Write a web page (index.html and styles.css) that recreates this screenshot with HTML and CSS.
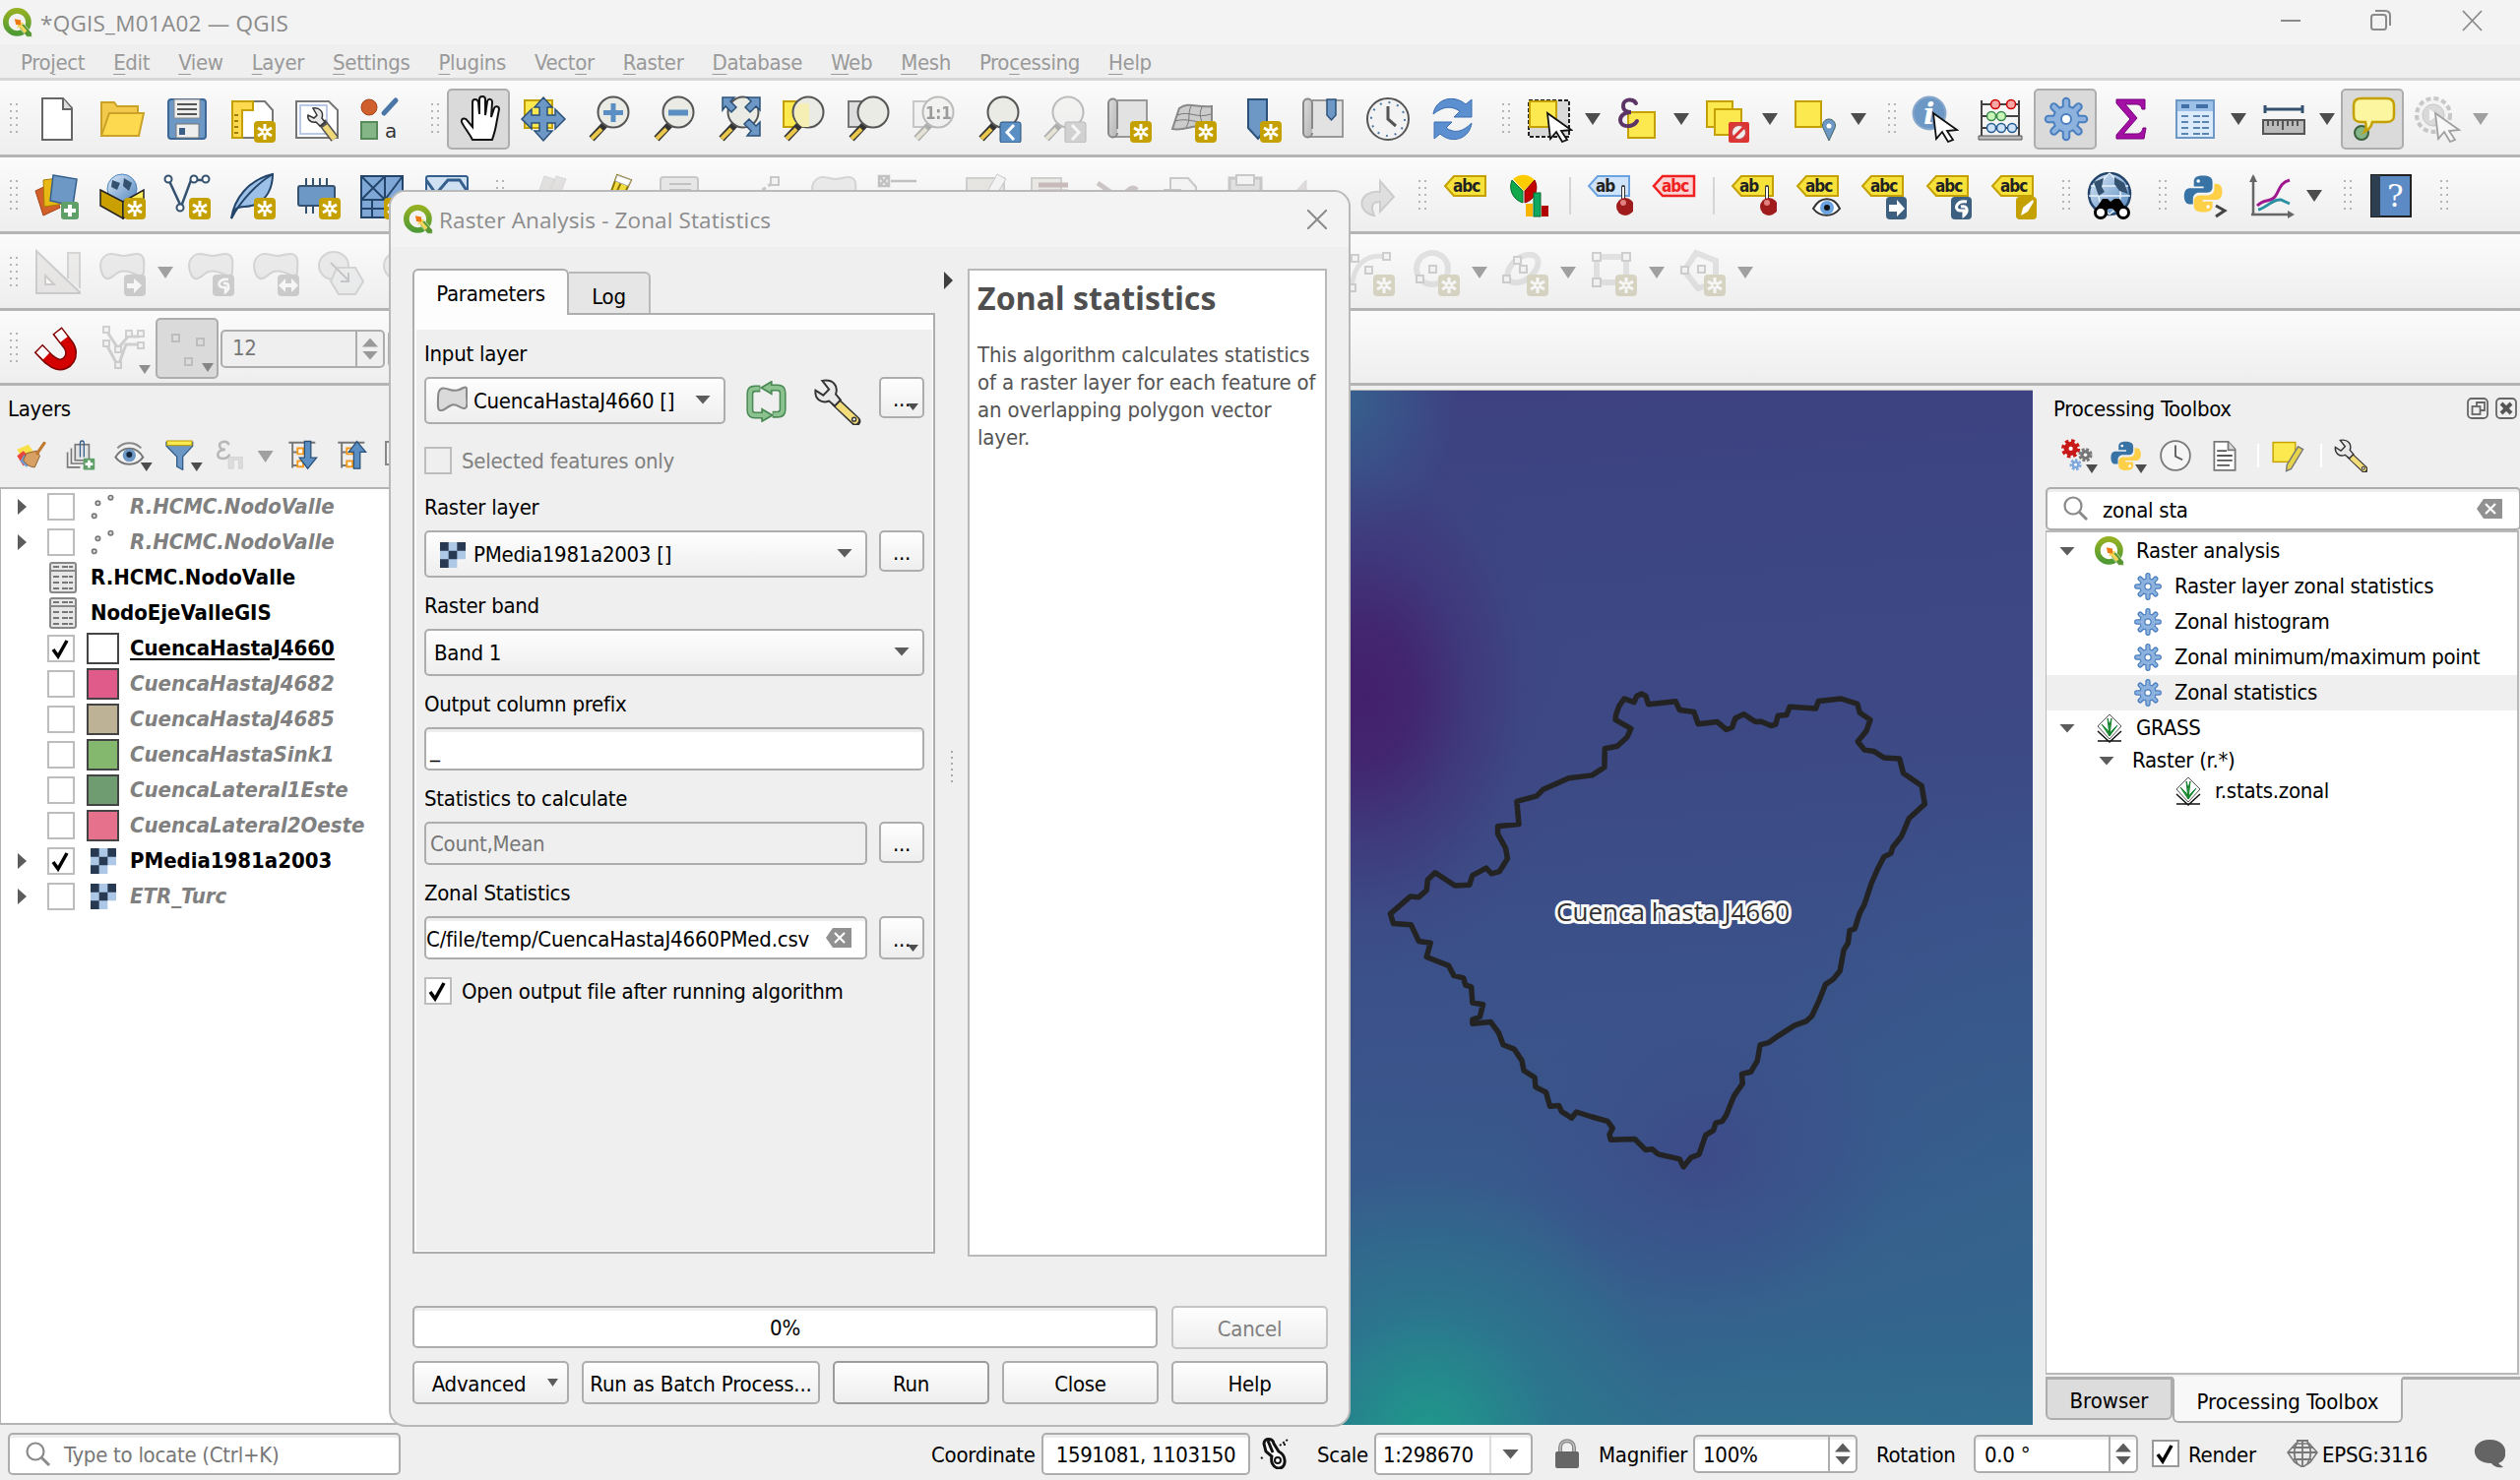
FILE: index.html
```html
<!DOCTYPE html>
<html lang="en">
<head>
<meta charset="utf-8">
<title>QGIS</title>
<link rel="stylesheet" href="styles.css">
</head>
<body>
<svg class="defs" aria-hidden="true">
<defs>
<linearGradient id="qg" x1="0" y1="0" x2="0" y2="1"><stop offset="0" stop-color="#93b023"/><stop offset="1" stop-color="#4f9a35"/></linearGradient>
<linearGradient id="steel" x1="0" y1="0" x2="1" y2="1"><stop offset="0" stop-color="#dcdcdc"/><stop offset="1" stop-color="#b5b5b5"/></linearGradient>
<linearGradient id="sky" x1="0" y1="0" x2="1" y2="1"><stop offset="0" stop-color="#dbe9f8"/><stop offset="1" stop-color="#4f84bd"/></linearGradient>
</defs>

<symbol id="logo" viewBox="0 0 48 48"><circle cx="23" cy="23" r="18.500" fill="none" stroke="url(#qg)" stroke-width="9"/><path d="M27 27l7-1 13 15v6h-8L27 33z" fill="#589632" stroke="#fff" stroke-width="1"/><path d="M25 24l9 0-3 4 8 9-4 4-8-10-4 2z" fill="#f5d65a"/><path d="M19 18l10 2 0 8-8-1z" fill="#ee7913"/></symbol>

<symbol id="b-new" viewBox="0 0 48 48"><rect x="26" y="26" width="22" height="22" rx="4" fill="#c4a000"/><path d="M37 29v16M30 33l14 8M30 41l14-8" stroke="#fff" stroke-width="3"/><circle cx="37" cy="37" r="3.500" fill="#fff"/><circle cx="37" cy="37" r="1.500" fill="#c4a000"/></symbol>
<symbol id="lens" viewBox="0 0 48 48"><path d="M21 29L7 44" stroke="#333" stroke-width="7"/><path d="M17 34L7 44" stroke="#eac64a" stroke-width="4"/><circle cx="29" cy="17" r="15.500" fill="#ebebe6" stroke="#555" stroke-width="2"/></symbol>
<symbol id="cursor" viewBox="0 0 48 48"><path d="M22 18l24 17-10 1 6 9-5 2-6-10-6 7z" fill="#fff" stroke="#111" stroke-width="1.800"/></symbol>
<symbol id="tag" viewBox="0 0 48 48"><path d="M12 4h32v20H12L3 14z" fill="#f7e23c" stroke="#c4a000" stroke-width="2"/><text x="11" y="20" class="ic-abc">abc</text></symbol>
<symbol id="poly" viewBox="0 0 48 48"><path d="M4 10c6-9 15-3 22-3s12-4 17-1 3 12 3 17-4 5-8 3-10-5-16-3-9 9-14 7-8-14-4-20z" fill="#d2d5d2" stroke="#999" stroke-width="2"/></symbol>
<symbol id="b-grey" viewBox="0 0 48 48"><rect x="26" y="26" width="22" height="22" rx="4" fill="#888"/></symbol>

<symbol id="new" viewBox="0 0 48 48"><path d="M9 3h21l9 10v32H9z" fill="#fff" stroke="#666" stroke-width="2"/><path d="M30 3v11h9" fill="#ddd" stroke="#666" stroke-width="2"/></symbol>
<symbol id="open" viewBox="0 0 48 48"><path d="M3 40V7h13l3 4h21v7" fill="#f2c94b" stroke="#c9a227" stroke-width="2"/><path d="M3 41l8-23h35l-5 23z" fill="#fcd94f" stroke="#c9a227" stroke-width="2"/></symbol>
<symbol id="save" viewBox="0 0 48 48"><rect x="5" y="4" width="38" height="40" rx="3" fill="#6d97c4" stroke="#3b6796" stroke-width="2"/><rect x="11" y="4" width="26" height="19" fill="#eee" stroke="#888"/><path d="M14 9h20M14 14h20M14 19h20" stroke="#555" stroke-width="2"/><rect x="13" y="29" width="23" height="14" fill="#eee" stroke="#777"/><rect x="16" y="33" width="6" height="7" fill="#3b5f86"/></symbol>
<symbol id="layout" viewBox="0 0 48 48"><path d="M4 6h33l8 9v28H4z" fill="#fff" stroke="#777" stroke-width="2"/><path d="M4 6h21v9H14v28H4z" fill="#fcd94f" stroke="#c4a000" stroke-width="2"/><path d="M6 20h4M6 26h4M6 32h4M6 38h4" stroke="#a08000" stroke-width="2"/><use href="#b-new"/></symbol>
<symbol id="layman" viewBox="0 0 48 48"><path d="M3 6h33l9 9v28H3z" fill="#fff" stroke="#777" stroke-width="2"/><path d="M7 10h27v29H7z" fill="none" stroke="#bcc9e6" stroke-width="2"/><path d="M29 27l13 17" stroke="#555" stroke-width="9"/><path d="M32 31l10 13" stroke="#f0d878" stroke-width="6"/><path d="M20 13c7-1 11 4 9 10l3 4-5 4-4-4c-6 1-9-3-8-7l6 3 3-3z" fill="#e8e8e8" stroke="#333" stroke-width="1.500"/></symbol>
<symbol id="style" viewBox="0 0 48 48"><circle cx="11" cy="12" r="8" fill="#cf5f2c" stroke="#a4441a"/><path d="M26 18L38 5" stroke="#4a76a8" stroke-width="5" stroke-linecap="round"/><rect x="3" y="27" width="16" height="17" fill="#84b587" stroke="#578a5b" stroke-width="2"/><text x="27" y="43" font-family="DejaVu Sans" font-size="20" fill="#333">a</text></symbol>
<symbol id="hand" viewBox="0 0 48 48"><path d="M16 45c-4-8-9-13-11-18-1-4 4-5 6-1l5 6V7c0-4 5-4 6 0l1 12V4c0-4 6-4 6 0v16l2-14c1-3 5-3 5 1l-1 15 3-9c1-3 5-2 5 1l-3 16c-1 6-2 9-4 15z" transform="translate(1 0)" fill="#fff" stroke="#111" stroke-width="2"/></symbol>
<symbol id="pan" viewBox="0 0 48 48"><rect x="5" y="5" width="28" height="28" fill="#fce94f" stroke="#c4a000" stroke-width="2"/><path d="M24 2l9 10h-5v8h8v-6l10 10-10 10v-6h-8v8h5l-9 10-9-10h5v-8h-8v6L2 24l10-10v6h8v-8h-5z" fill="#6d97c4" stroke="#2b5178" stroke-width="1.500"/></symbol>
<symbol id="zin" viewBox="0 0 48 48"><use href="#lens"/><path d="M29 8v19M19 17.500h20" stroke="#5b8fc4" stroke-width="5"/></symbol>
<symbol id="zout" viewBox="0 0 48 48"><use href="#lens"/><path d="M19 17.500h20" stroke="#5b8fc4" stroke-width="6"/></symbol>
<symbol id="zfull" viewBox="0 0 48 48"><use href="#lens"/><path d="M8 2h12l-4 4 6 6-5 5-6-6-3 4zM46 2v13l-4-4-6 6-5-5 6-6-4-4zM46 41v-14l-4 4-7-7-5 5 7 7-4 5z" fill="#6d97c4" stroke="#2b5178" stroke-width="1.500"/></symbol>
<symbol id="zsel" viewBox="0 0 48 48"><rect x="4" y="6" width="26" height="26" fill="#fce94f" stroke="#c4a000" stroke-width="2"/><use href="#lens"/><path d="M20 8h10v24h-7a15 15 0 0 1-3-24z" fill="#f5efb5"/></symbol>
<symbol id="zlay" viewBox="0 0 48 48"><rect x="4" y="6" width="26" height="26" fill="#ddd" stroke="#777" stroke-width="2"/><use href="#lens"/></symbol>
<symbol id="zone" viewBox="0 0 48 48"><rect x="4" y="6" width="26" height="26" fill="#eee" stroke="#777" stroke-width="2"/><use href="#lens"/><text x="16" y="24" font-family="DejaVu Sans Condensed" font-weight="bold" font-size="17">1:1</text></symbol>
<symbol id="zlast" viewBox="0 0 48 48"><use href="#lens"/><rect x="26" y="27" width="21" height="21" rx="2" fill="#5b8fc4" stroke="#2b5178"/><path d="M40 30l-7 7.500 7 7.500" fill="none" stroke="#fff" stroke-width="3"/></symbol>
<symbol id="znext" viewBox="0 0 48 48"><use href="#lens"/><rect x="26" y="27" width="21" height="21" rx="2" fill="#999" stroke="#555"/><path d="M33 30l7 7.500-7 7.500" fill="none" stroke="#fff" stroke-width="3"/></symbol>
<symbol id="newmap" viewBox="0 0 48 48"><path d="M13 5h30v37H8" fill="#e2e2e2" stroke="#999" stroke-width="2"/><path d="M13 34V8c0-6-9-6-9 0v30c0 6 9 6 9 0" fill="url(#steel)" stroke="#888" stroke-width="2"/><use href="#b-new"/></symbol>
<symbol id="new3d" viewBox="0 0 48 48"><path d="M10 13c10-7 18 0 33-2v24c-15-10-25 2-40-1z" fill="#ccc" stroke="#888" stroke-width="2"/><path d="M8 20c12-5 20 4 34-1M6 26c12-4 22 3 36 1M22 11c-4 8 0 14-5 21M33 12c-4 8 0 13 1 19" fill="none" stroke="#777"/><use href="#b-new"/></symbol>
<symbol id="newbm" viewBox="0 0 48 48"><path d="M14 4h19v29l-9 11-10-11z" fill="#6d97c4" stroke="#2b5178" stroke-width="2"/><use href="#b-new"/></symbol>
<symbol id="bms" viewBox="0 0 48 48"><path d="M13 5h31v37H8" fill="#e2e2e2" stroke="#999" stroke-width="2"/><path d="M13 34V8c0-6-9-6-9 0v30c0 6 9 6 9 0" fill="url(#steel)" stroke="#888" stroke-width="2"/><path d="M28 4h9v16l-4.500 5L28 20z" fill="#6d97c4" stroke="#2b5178" stroke-width="1.500"/></symbol>
<symbol id="clock" viewBox="0 0 48 48"><circle cx="24" cy="24" r="21" fill="#f3f3f3" stroke="#555" stroke-width="2"/><circle cx="24" cy="24" r="17" fill="none" stroke="#4a76a8" stroke-width="2" stroke-dasharray="2 6.900"/><path d="M24 11v13l8 7" fill="none" stroke="#555" stroke-width="3"/></symbol>
<symbol id="refresh" viewBox="0 0 48 48"><path d="M4 19C6 4 24-2 37 9l6-5v18H25l6-6C22 10 14 11 4 19z" fill="#5b8fd0" stroke="#3b6fb0"/><path d="M43 28C41 44 23 50 11 39l-6 5V27h18l-6 6c9 6 17 4 26-5z" fill="#5b8fd0" stroke="#3b6fb0"/></symbol>

<symbol id="sel" viewBox="0 0 48 48"><rect x="3" y="5" width="41" height="37" fill="#d9d9d9" stroke="#222" stroke-width="2" stroke-dasharray="4 2"/><rect x="4" y="6" width="27" height="26" fill="#fce94f" stroke="#c4a000" stroke-width="2"/><use href="#cursor"/></symbol>
<symbol id="eps" viewBox="0 0 48 48"><rect x="14" y="17" width="27" height="26" fill="#fce94f" stroke="#c4a000" stroke-width="2"/><path d="M22 8c-3-6-14-4-13 3 0 4 4 6 8 6-6 0-11 3-11 8 0 8 13 8 17 1" fill="none" stroke="#5c3566" stroke-width="4" stroke-linecap="round"/></symbol>
<symbol id="desel" viewBox="0 0 48 48"><rect x="4" y="6" width="26" height="26" fill="#fce94f" stroke="#c4a000" stroke-width="2"/><rect x="12" y="14" width="27" height="26" fill="#fce94f" stroke="#c4a000" stroke-width="2"/><rect x="26" y="27" width="21" height="21" rx="2" fill="#d33"/><circle cx="36.500" cy="37.500" r="7.500" fill="#eee" stroke="#c44" stroke-width="2"/><path d="M31 43l11-11" stroke="#d33" stroke-width="3"/></symbol>
<symbol id="selloc" viewBox="0 0 48 48"><rect x="4" y="6" width="26" height="26" fill="#fce94f" stroke="#c4a000" stroke-width="2"/><path d="M38 46l-6-13a6.500 6.500 0 1 1 12 0z" fill="#6d97c4" stroke="#466" /><circle cx="38" cy="31" r="2.500" fill="#fff"/></symbol>

<symbol id="ident" viewBox="0 0 48 48"><circle cx="18" cy="18" r="16.500" fill="#6d97c4" stroke="#88a8cc" stroke-width="2"/><text x="12" y="29" font-family="DejaVu Serif" font-style="italic" font-weight="bold" font-size="30" fill="#fff">i</text><use href="#cursor"/></symbol>
<symbol id="abacus" viewBox="0 0 48 48"><path d="M5 5v37M43 5v37M5 9h38M5 21h38M5 33h38" stroke="#444" stroke-width="2"/><path d="M2 41h44v4H2z" fill="#bbb" stroke="#555"/><g fill="#f9a8a8" stroke="#c00" stroke-width="1.500"><circle cx="19" cy="9" r="4.500"/><circle cx="35" cy="9" r="4.500"/></g><g fill="#c8f5b8" stroke="#3a8a4a" stroke-width="1.500"><circle cx="15" cy="21" r="4.500"/><circle cx="25" cy="21" r="4.500"/></g><g fill="#cde3f9" stroke="#24598f" stroke-width="1.500"><circle cx="15" cy="33" r="4.500"/><circle cx="25" cy="33" r="4.500"/><circle cx="36" cy="33" r="4.500"/></g></symbol>
<symbol id="gear" viewBox="0 0 48 48"><g stroke="#4a7fc0" stroke-width="8.500" stroke-linecap="round"><path d="M24 6v36M6 24h36M11.500 11.500l25 25M36.500 11.500l-25 25"/></g><circle cx="24" cy="24" r="13" fill="#8db2dd" stroke="#4a7fc0" stroke-width="2"/><g stroke="#8db2dd" stroke-width="4.500" stroke-linecap="round"><path d="M24 6v36M6 24h36M11.500 11.500l25 25M36.500 11.500l-25 25"/></g><circle cx="24" cy="24" r="12" fill="#8db2dd"/><circle cx="24" cy="24" r="5" fill="#fff" stroke="#4a7fc0" stroke-width="2"/></symbol>
<symbol id="sigma" viewBox="0 0 48 48"><path d="M10 4h29v10h-3c-1-4-3-5-7-5H19l12 14-14 16h13c4 0 6-2 7-6h3l-2 11H10v-4l14-16L10 8z" fill="#a40fa4" stroke="#75007b"/></symbol>
<symbol id="table" viewBox="0 0 48 48"><rect x="5" y="5" width="38" height="38" fill="#dcebfb" stroke="#6d97c4" stroke-width="2"/><rect x="6" y="6" width="36" height="10" fill="#9dc0e8"/><path d="M10 11h8M25 11h12" stroke="#3f6fa5" stroke-width="4"/><path d="M10 21h8M22 21h17M10 27h8M22 27h17M10 33h8M22 33h17M10 39h8M22 39h17" stroke="#5b84b0" stroke-width="2" stroke-dasharray="7 2"/></symbol>
<symbol id="ruler" viewBox="0 0 48 48"><path d="M5 14h38M5 10v8M43 10v8" stroke="#34526f" stroke-width="3"/><rect x="3" y="25" width="42" height="14" fill="#bbb" stroke="#555" stroke-width="2"/><path d="M8 26v5M13 26v5M18 26v5M23 26v9M28 26v5M33 26v5M38 26v5" stroke="#333" stroke-width="1.500"/></symbol>
<symbol id="tip" viewBox="0 0 48 48"><circle cx="12" cy="38" r="7" fill="#84b587" stroke="#3c5f3e" stroke-width="2"/><path d="M12 3h25c6 0 8 3 8 7v10c0 5-2 7-8 7H23c-1 5-4 8-8 10 2-3 2-6 1-10h-4c-6 0-8-2-8-7V10c0-4 2-7 8-7z" fill="#fcf6a0" stroke="#c4a000" stroke-width="2.500"/></symbol>
<symbol id="action" viewBox="0 0 48 48"><circle cx="20" cy="20" r="17" fill="#eee" stroke="#777" stroke-width="4" stroke-dasharray="5 3"/><circle cx="20" cy="20" r="11" fill="#aaa" stroke="#777"/><path d="M16 14l9 6-9 6z" fill="#fff"/><use href="#cursor"/></symbol>

<symbol id="dsm" viewBox="0 0 48 48"><path d="M2 19l17-8 8 25-17 8z" fill="#d2602a" stroke="#a84010"/><path d="M10 8l22-3-1 27-20 3z" fill="#e8b814" stroke="#a88000"/><path d="M20 3l24 4-4 27-23-5z" fill="#6d97c4" stroke="#345f8c" stroke-width="1.500"/><rect x="28" y="30" width="18" height="18" rx="3" fill="#5f9f68"/><path d="M37 33v12M31 39h12" stroke="#fff" stroke-width="4"/></symbol>
<symbol id="gpkg" viewBox="0 0 48 48"><circle cx="24" cy="17" r="15" fill="url(#sky)" stroke="#4f84bd"/><path d="M14 8l8 3-3 7-6-3zM26 6l8 5-3 8-6-5z" fill="#34526f"/><path d="M2 18l23 12v17L2 34z" fill="#c9a000" stroke="#222" stroke-width="1.500"/><path d="M25 30l21-12v17L25 47z" fill="#fff060" stroke="#222" stroke-width="1.500"/><use href="#b-new"/></symbol>
<symbol id="vlay" viewBox="0 0 48 48"><path d="M6 9l12 26L28 8h14" fill="none" stroke="#34526f" stroke-width="2.500"/><g fill="#fff" stroke="#34526f" stroke-width="2"><circle cx="5" cy="7" r="3.500"/><circle cx="17" cy="36" r="3.500"/><circle cx="31" cy="7" r="3.500"/><circle cx="43" cy="7" r="3.500"/></g><use href="#b-new"/></symbol>
<symbol id="feather" viewBox="0 0 48 48"><path d="M3 47C6 27 20 8 45 2c0 14-6 26-18 31-8 3-15 1-19 4z" fill="#9dc0e8" stroke="#24456b" stroke-width="2"/><path d="M3 47C12 30 28 12 45 2" fill="none" stroke="#24456b" stroke-width="2"/><use href="#b-new"/></symbol>
<symbol id="chip" viewBox="0 0 48 48"><path d="M13 6v36M20 6v36M27 6v36M34 6v36" stroke="#34526f" stroke-width="2"/><rect x="5" y="14" width="37" height="20" rx="2" fill="#6d97c4" stroke="#34526f" stroke-width="2"/><use href="#b-new"/></symbol>
<symbol id="mesh" viewBox="0 0 48 48"><rect x="3" y="4" width="42" height="42" fill="#7fa8d6" stroke="#24456b" stroke-width="2"/><path d="M3 4l24 24M27 4L3 28M3 28h42M27 4v42M45 4L27 28M3 37h24M14 28v18" stroke="#24456b" stroke-width="2"/><use href="#b-new"/></symbol>
<symbol id="vmesh" viewBox="0 0 48 48"><rect x="3" y="4" width="42" height="42" rx="2" fill="#cfe0f2" stroke="#345f8c" stroke-width="2"/><path d="M3 8l10 14L25 8h12l8 12" fill="none" stroke="#345f8c" stroke-width="3"/></symbol>
<symbol id="pencils" viewBox="0 0 48 48"><path d="M18 4l10 3-14 34-8-3zM30 4l10 3-14 34-8-3z" fill="#c9b8b0" stroke="#999"/></symbol>
<symbol id="pencil" viewBox="0 0 48 48"><path d="M26 3l14 5-16 34-9 5-1-11z" fill="#f2dc3c" stroke="#8a7500" stroke-width="2"/><path d="M32 6L17 38" stroke="#8a7500" stroke-width="2"/><path d="M26 3l14 5-3 6-13-5z" fill="#fff" stroke="#aaa"/></symbol>
<symbol id="doc" viewBox="0 0 48 48"><rect x="4" y="5" width="38" height="40" rx="3" fill="#ccc" stroke="#777" stroke-width="2"/><path d="M13 12h22M13 18h22" stroke="#666" stroke-width="2"/></symbol>
<symbol id="dots" viewBox="0 0 48 48"><path d="M6 26l26-18" stroke="#777" stroke-width="3" stroke-dasharray="4 3"/><rect x="26" y="5" width="8" height="8" fill="#eee" stroke="#777" stroke-width="2"/></symbol>
<symbol id="vtool" viewBox="0 0 48 48"><path d="M4 4h10v10H4zM4 20h10v10H4zM4 4l10 10M14 4L4 14M16 9h26M16 22h26" fill="none" stroke="#666" stroke-width="2.500"/></symbol>
<symbol id="multi" viewBox="0 0 48 48"><rect x="3" y="6" width="38" height="36" fill="#d2c8a0" stroke="#888" stroke-width="2"/><path d="M34 2l9 5-10 16-8-5z" fill="#eee" stroke="#777"/></symbol>
<symbol id="del" viewBox="0 0 48 48"><rect x="3" y="6" width="30" height="36" fill="#d8d0a8" stroke="#888" stroke-width="2"/><path d="M10 13h30M10 20h30" stroke="#c04040" stroke-width="5"/></symbol>
<symbol id="cut" viewBox="0 0 48 48"><path d="M4 11l26 18M44 18c-6-6-14 4-16 12" fill="none" stroke="#a66" stroke-width="5"/></symbol>
<symbol id="copy" viewBox="0 0 48 48"><path d="M12 6h18l8 9v12H12zM6 18h16l6 7v18H6z" fill="#eee" stroke="#777" stroke-width="2"/></symbol>
<symbol id="paste" viewBox="0 0 48 48"><path d="M6 6h32v38H6z" fill="#bbb" stroke="#777" stroke-width="3"/><path d="M13 3h18v10H13z" fill="#eee" stroke="#777" stroke-width="2"/></symbol>
<symbol id="undo" viewBox="0 0 48 48"><path d="M18 8v12c20-4 24 12 12 22 2-12-2-14-12-13v9L4 23z" fill="#c8a8a0" stroke="#999"/></symbol>
<symbol id="redo" viewBox="0 0 48 48"><path d="M27 9l14 16-14 15V30c-8 0-10 4-6 14C2 40 5 18 27 20z" fill="#b8bcb8" stroke="#888" stroke-width="2"/></symbol>

<symbol id="abc" viewBox="0 0 48 48"><use href="#tag"/></symbol>
<symbol id="diag" viewBox="0 0 48 48"><path d="M17 19L6 7A15 15 0 0 1 28 8z" fill="#ffcc00"/><path d="M16 19L5 8a17 17 0 0 0 11 23z" fill="#12a84c" stroke="#046a2c"/><path d="M18 19L28 8a16 16 0 0 1-10 23z" fill="#c40000" stroke="#800"/><rect x="19" y="32" width="7" height="13" fill="#f9b500"/><rect x="27" y="21" width="7" height="24" fill="#0fa860" stroke="#046a2c"/><rect x="35" y="34" width="7" height="11" fill="#b00000"/></symbol>
<symbol id="abpin" viewBox="0 0 48 48"><path d="M12 4h32v20H12L3 14z" fill="#cfe3fb" stroke="#6ba3e0" stroke-width="2"/><text x="10" y="20" class="ic-abc">ab</text><path d="M38 15v14" stroke="#333" stroke-width="4" stroke-linecap="round"/><path d="M38 15v14" stroke="#fff" stroke-width="2"/><circle cx="40" cy="35" r="9" fill="#a01c1c"/><circle cx="38" cy="31" r="3" fill="#e08080"/></symbol>
<symbol id="abcred" viewBox="0 0 48 48"><path d="M12 4h32v20H12L3 14z" fill="#fbd5d5" stroke="#f02020" stroke-width="2.500"/><text x="11" y="20" class="ic-abc red">abc</text></symbol>
<symbol id="abpiny" viewBox="0 0 48 48"><path d="M12 4h32v20H12L3 14z" fill="#f7e23c" stroke="#c4a000" stroke-width="2"/><text x="10" y="20" class="ic-abc">ab</text><path d="M38 15v14" stroke="#333" stroke-width="4" stroke-linecap="round"/><path d="M38 15v14" stroke="#fff" stroke-width="2"/><circle cx="40" cy="35" r="9" fill="#a01c1c"/><circle cx="38" cy="31" r="3" fill="#e08080"/></symbol>
<symbol id="abceye" viewBox="0 0 48 48"><use href="#tag"/><path d="M19 37c7-13 21-13 27 0-7 9-20 9-27 0z" fill="#fff" stroke="#333" stroke-width="2"/><circle cx="33" cy="36" r="7" fill="#6ba3e0"/><circle cx="33" cy="36" r="3" fill="#111"/></symbol>
<symbol id="abcmove" viewBox="0 0 48 48"><use href="#tag"/><rect x="27" y="25" width="21" height="23" rx="4" fill="#3d5f80"/><path d="M30 33h8v-5l8 9-8 8v-5h-8z" fill="#fff"/></symbol>
<symbol id="abcrot" viewBox="0 0 48 48"><use href="#tag"/><rect x="27" y="25" width="21" height="23" rx="4" fill="#3d5f80"/><path d="M43 30c-10-2-14 8-7 9h4v5c5-4 4-11-3-9" fill="none" stroke="#fff" stroke-width="3"/></symbol>
<symbol id="abced" viewBox="0 0 48 48"><use href="#tag"/><rect x="27" y="25" width="21" height="23" rx="4" fill="#c4a000"/><path d="M44 28L34 36l-2 8 7-4 6-10z" fill="#fff"/></symbol>
<symbol id="meta" viewBox="0 0 48 48"><circle cx="24" cy="22" r="21" fill="url(#sky)" stroke="#24456b" stroke-width="2.500"/><path d="M5 14h38M3 24h42M24 1c-15 12-15 30 0 42M24 1c15 12 15 30 0 42" fill="none" stroke="#e8f2fc" stroke-width="1.500"/><path d="M8 10l10-4-2 9 3 5-6 4zM29 5l10 6 4 11-9-3-5-7z" fill="#34526f"/><path d="M17 27h5l3 3 4-3h5l9 13-9 4-7-7h-4l-6 7-9-4z" fill="#000"/><circle cx="15" cy="41" r="5.500" fill="#fff" stroke="#000" stroke-width="3"/><circle cx="38" cy="41" r="5.500" fill="#fff" stroke="#000" stroke-width="3"/></symbol>
<symbol id="py" viewBox="0 0 48 48"><path d="M23 4c-8 0-10 3-10 7v5h11v2H8c-4 0-6 4-6 9s2 9 6 9h4v-6c0-4 3-7 7-7h9c4 0 6-3 6-6v-6c0-5-4-7-11-7z" fill="#3873a6"/><path d="M24 45c8 0 10-3 10-7v-5H23v-2h16c4 0 6-4 6-9s-2-9-6-9h-3v6c0 4-3 7-7 7h-9c-4 0-7 3-7 6v6c0 5 4 7 11 7z" fill="#fdd048"/><circle cx="18" cy="10" r="2" fill="#fff"/><circle cx="29" cy="39" r="2" fill="#fff"/></symbol>
<symbol id="pycon" viewBox="0 0 48 48"><g transform="scale(.9)"><use href="#py" width="48" height="48"/></g><path d="M34 34l9 5-9 6" fill="none" stroke="#444" stroke-width="3"/></symbol>
<symbol id="plot" viewBox="0 0 48 48"><path d="M6 4v40M4 43h40" stroke="#666" stroke-width="2.500"/><path d="M6 2L2 10h8zM48 43l-7-4v8z" fill="#666"/><path d="M10 34c8-8 13-3 18-9s4-14 15-17" fill="none" stroke="#a01890" stroke-width="3"/><path d="M11 38c8-1 14-11 23-10l9 4" fill="none" stroke="#2a8fa0" stroke-width="3"/></symbol>
<symbol id="help" viewBox="0 0 48 48"><rect x="4" y="3" width="40" height="42" fill="#5b8ac4" stroke="#222" stroke-width="2"/><rect x="4" y="3" width="9" height="42" fill="#2c3e50"/><text x="20" y="35" font-family="DejaVu Serif" font-size="31" fill="#fff">?</text></symbol>

<symbol id="tri" viewBox="0 0 48 48"><path d="M3 2v43h45z" fill="#d8cdc6" stroke="#888" stroke-width="2"/><path d="M12 27v9h9z" fill="#fff" stroke="#888" stroke-width="2"/><path d="M35 30V4h12v36" fill="#ddd8c8" stroke="#999" stroke-width="2"/></symbol>
<symbol id="pmove" viewBox="0 0 48 48"><use href="#poly"/><use href="#b-grey"/><path d="M29 35h7v-5l8 7-8 8v-5h-7z" fill="#fff"/></symbol>
<symbol id="prot" viewBox="0 0 48 48"><use href="#poly"/><use href="#b-grey"/><path d="M42 31c-9-2-13 7-6 8h3v5c5-4 4-10-2-9" fill="none" stroke="#fff" stroke-width="2.500"/></symbol>
<symbol id="pscale" viewBox="0 0 48 48"><use href="#poly"/><use href="#b-grey"/><path d="M27 37l7-7v5h6v-5l7 7-7 7v-5h-6v5z" fill="#fff"/></symbol>
<symbol id="simp" viewBox="0 0 48 48"><ellipse cx="17" cy="17" rx="15" ry="14" fill="#d0d4d0" stroke="#999" stroke-width="2"/><path d="M20 19h19l8 14-8 13H22l-8-13z" fill="#d8dce0" stroke="#999" stroke-width="2"/><path d="M14 14l18 18M32 24v9h-8" fill="none" stroke="#777" stroke-width="2"/></symbol>
<symbol id="arc" viewBox="0 0 48 48"><path d="M4 40C6 16 18 4 40 8" fill="none" stroke="#bbb" stroke-width="5"/><g fill="#eee" stroke="#888" stroke-width="2"><path d="M1 36h7v7H1zM36 4h7v7h-7zM4 6h7v7H4zM18 18h7v7h-7z"/></g><use href="#b-new"/></symbol>
<symbol id="circ" viewBox="0 0 48 48"><circle cx="20" cy="20" r="16" fill="none" stroke="#bbb" stroke-width="6"/><path d="M17 17h7v7h-7zM4 27h7v7H4z" fill="#eee" stroke="#888" stroke-width="2"/><use href="#b-new"/></symbol>
<symbol id="ell" viewBox="0 0 48 48"><ellipse cx="22" cy="20" rx="18" ry="11" transform="rotate(-40 22 20)" fill="none" stroke="#bbb" stroke-width="6"/><path d="M19 17h7v7h-7zM2 27h7v7H2zM13 8h7v7h-7z" fill="#eee" stroke="#888" stroke-width="2"/><use href="#b-new"/></symbol>
<symbol id="rectt" viewBox="0 0 48 48"><rect x="7" y="8" width="30" height="26" fill="none" stroke="#bbb" stroke-width="6"/><path d="M3 4h8v8H3zM33 4h8v8h-8zM3 30h8v8H3z" fill="#eee" stroke="#888" stroke-width="2"/><use href="#b-new"/></symbol>
<symbol id="penta" viewBox="0 0 48 48"><path d="M18 4l20 8v22l-18 6-14-18z" fill="none" stroke="#bbb" stroke-width="6"/><path d="M20 17h7v7h-7zM3 18h7v7H3z" fill="#eee" stroke="#888" stroke-width="2"/><use href="#b-new"/></symbol>
<symbol id="magnet" viewBox="0 0 48 48"><g fill="none"><path d="M24 6l11 14c8 11-1 23-11 20-7-2-12-9-19-16" stroke="#7c0000" stroke-width="12"/><path d="M25 7l10 13c8 11-1 23-11 20-7-2-12-9-18-15" stroke="#d40000" stroke-width="9"/><path d="M25 7l6 8M6 25l7 7" stroke="#fff" stroke-width="9"/></g></symbol>
<symbol id="vnode" viewBox="0 0 48 48"><path d="M8 6l12 18 10-12h12M8 20l12 22 8-22 14 0" fill="none" stroke="#888" stroke-width="3"/><g fill="#eee" stroke="#888" stroke-width="2"><path d="M5 2h6v6H5zM5 16h6v6H5zM17 22h6v6h-6zM17 38h6v6h-6zM28 6h6v6h-6zM40 6h6v6h-6zM40 18h6v6h-6z"/></g></symbol>
<symbol id="sq3" viewBox="0 0 48 48"><g fill="#ddd" stroke="#888" stroke-width="2"><path d="M8 10h7v7H8zM33 14h7v7h-7zM21 34h7v7h-7z"/></g></symbol>

<symbol id="brush" viewBox="0 0 48 48"><path d="M2 16l18-8 14 20-18 14z" fill="#f9e04a"/><path d="M2 26l10-8 12 12-12 12z" fill="#e8453c"/><path d="M7 34l6-10 10 14-6 6z" fill="#6aa0dc"/><path d="M17 22l16-4 5 8-8 18c-8 0-16-6-18-12z" fill="#d9a066" stroke="#8a5a2b" stroke-width="1.500"/><path d="M34 22L45 6" stroke="#c07a30" stroke-width="5" stroke-linecap="round"/></symbol>
<symbol id="addg" viewBox="0 0 48 48"><path d="M4 20v24h20M10 14v24h20" fill="none" stroke="#777" stroke-width="2.500"/><rect x="16" y="8" width="22" height="25" fill="#e4e4e4" stroke="#777" stroke-width="2.500"/><path d="M24 28V6c0-5 6-5 6 0v22" fill="none" stroke="#345f8c" stroke-width="2"/><rect x="29" y="30" width="18" height="18" rx="2" fill="#5f9f68"/><path d="M38 33v12M32 39h12" stroke="#fff" stroke-width="4"/></symbol>
<symbol id="eye" viewBox="0 0 48 48"><path d="M2 28c10-18 32-18 42 0-10 14-32 14-42 0z" fill="#f5f5f5" stroke="#777" stroke-width="3"/><path d="M5 14c10-10 26-10 36 0" fill="none" stroke="#888" stroke-width="3"/><circle cx="23" cy="25" r="10" fill="#6d97c4"/><circle cx="23" cy="24" r="4.500" fill="#16263a"/></symbol>
<symbol id="filter" viewBox="0 0 48 48"><path d="M3 5h40v6L28 27v20l-9-5V27L3 11z" fill="#6d97c4" stroke="#345f8c" stroke-width="2"/><rect x="4" y="3" width="38" height="7" fill="#fce94f" stroke="#b89a00" stroke-width="1.500"/></symbol>
<symbol id="epsf" viewBox="0 0 48 48"><path d="M22 7c-3-6-15-4-14 3 0 4 4 6 9 6-7 0-12 3-12 8 0 8 14 8 18 1" fill="none" stroke="#555" stroke-width="4" stroke-linecap="round"/><path d="M22 28h22v18h-6V32h-8v14h-8z" fill="#bbb" stroke="#888"/></symbol>
<symbol id="expand" viewBox="0 0 48 48"><path d="M2 5h42M8 5v40M8 20h10M8 41h10" fill="none" stroke="#777" stroke-width="3"/><path d="M16 14h9v9h-9zM16 34h9v9h-9z" fill="#fff" stroke="#f39a1e" stroke-width="3"/><path d="M27 3h10v26h9L32 46 19 29h8z" fill="#5b8fc4" stroke="#2b5178" stroke-width="2"/></symbol>
<symbol id="collapse" viewBox="0 0 48 48"><path d="M2 5h42M8 5v40M8 20h10M8 41h10" fill="none" stroke="#777" stroke-width="3"/><path d="M16 14h9v9h-9zM16 34h9v9h-9z" fill="#fff" stroke="#f39a1e" stroke-width="3"/><path d="M27 46h10V20h9L32 3 19 20h8z" fill="#5b8fc4" stroke="#2b5178" stroke-width="2"/></symbol>
<symbol id="pts" viewBox="0 0 28 28"><g fill="#ddd" stroke="#777" stroke-width="1.800"><circle cx="4" cy="24" r="2.400"/><circle cx="8" cy="10" r="2.400"/><circle cx="22" cy="4" r="2.400"/></g></symbol>
<symbol id="tbl" viewBox="0 0 28 32"><rect x="1" y="1" width="26" height="30" rx="2" fill="#e6e6e6" stroke="#888" stroke-width="2"/><path d="M1 9h26" stroke="#888" stroke-width="2"/><path d="M4 5h6M13 5h11M4 15h6M13 15h11M4 21h6M13 21h11M4 27h6M13 27h11" stroke="#777" stroke-width="2" stroke-dasharray="6 1"/></symbol>
<symbol id="ras" viewBox="0 0 27 27" preserveAspectRatio="none"><path d="M0 0h27v18h-9v9H0z" fill="#adc8e6"/><path d="M0 0h9v9H0zM18 0h9v9h-9zM9 9h9v9H9zM0 18h9v9H0z" fill="#283a52"/></symbol>
<symbol id="polyi" viewBox="0 0 32 26"><path d="M2 12C2 0 8 2 14 4s10 0 14-2 3 2 3 8 2 12-2 13-8-6-14-3-8 6-11 5-2-6-2-13z" fill="#dadada" stroke="#888" stroke-width="2"/></symbol>
<symbol id="iter" viewBox="0 0 48 48"><g fill="none" stroke="#4a8a55" stroke-width="8"><path d="M17 9h-6c-4 0-6 2-6 6v19c0 4 2 6 6 6h10M31 39h6c4 0 6-2 6-6V14c0-4-2-6-6-6H27"/></g><path d="M30 1v14L18 8zM19 33v14l12-7z" fill="#8cc28f" stroke="#4a8a55" stroke-width="2"/><g fill="none" stroke="#8cc28f" stroke-width="4.500"><path d="M16 9h-5c-4 0-6 2-6 6v19c0 4 2 6 6 6h11M32 39h5c4 0 6-2 6-6V14c0-4-2-6-6-6H26"/></g></symbol>
<symbol id="wrench" viewBox="0 0 48 48"><path d="M23 24L44 44" stroke="#333" stroke-width="10" stroke-linecap="round"/><path d="M26 27L43 43" stroke="#f3dc7a" stroke-width="7" stroke-linecap="round"/><circle cx="42" cy="42" r="2" fill="#fff" stroke="#333" stroke-width="1.500"/><path d="M9 2c11-2 17 5 14 14l5 6-6 6-6-5C8 26 1 21 2 12l8 5 6-6z" fill="#e8e8e8" stroke="#333" stroke-width="2"/></symbol>
<symbol id="clr" viewBox="0 0 26 20"><path d="M7 0h19v20H7L0 10z" fill="#919191"/><path d="M9 5l10 10M19 5L9 15" stroke="#fff" stroke-width="2.200"/></symbol>
<symbol id="search" viewBox="0 0 26 26"><circle cx="10" cy="10" r="8.500" fill="none" stroke="#8a8a8a" stroke-width="2.200"/><path d="M16 16l8 8" stroke="#8a8a8a" stroke-width="3"/></symbol>
<symbol id="check" viewBox="0 0 28 28"><path d="M6 15l5 7L20 6" fill="none" stroke="#000" stroke-width="3.500"/></symbol>
<symbol id="gears" viewBox="0 0 48 48"><circle cx="15" cy="14" r="10" fill="#c81818" stroke="#c81818" stroke-width="7" stroke-dasharray="4.500 3.400"/><circle cx="15" cy="14" r="3" fill="#fff"/><circle cx="36" cy="23" r="7" fill="#777" stroke="#777" stroke-width="6" stroke-dasharray="3.500 2"/><circle cx="36" cy="23" r="2.500" fill="#fff"/><circle cx="22" cy="37" r="5.500" fill="#7fa8dc" stroke="#7fa8dc" stroke-width="6" stroke-dasharray="3 1.900"/><circle cx="22" cy="37" r="2" fill="#fff"/></symbol>
<symbol id="hist" viewBox="0 0 48 48"><circle cx="24" cy="24" r="21" fill="#f5f5f5" stroke="#777" stroke-width="2.500"/><path d="M24 9v16l10 5" fill="none" stroke="#555" stroke-width="2.500"/></symbol>
<symbol id="page" viewBox="0 0 48 48"><path d="M9 4h20l10 11v30H9z" fill="#fff" stroke="#777" stroke-width="2.500"/><path d="M29 4v12h10" fill="#ddd" stroke="#777" stroke-width="2.500"/><path d="M13 17h14M13 24h22M13 31h22M13 38h18" stroke="#555" stroke-width="2.500"/></symbol>
<symbol id="edit" viewBox="0 0 48 48"><rect x="3" y="5" width="32" height="28" fill="#fce94f" stroke="#c4a000" stroke-width="2"/><path d="M39 11l7 4-17 28-7 3 1-9z" fill="#e8d44a" stroke="#777" stroke-width="2"/></symbol>
<symbol id="grass" viewBox="0 0 26 30"><path d="M13 1l12 12-12 13L1 13z" fill="#fff" stroke="#555" stroke-width="1"/><path d="M13 23L11 5l2 7 2-7zM13 23L5 11l6 6zM13 23l8-11-6 6z" fill="#2aa040" stroke="#14802a"/><path d="M1 18l12 11 12-11M1 28h24" fill="none" stroke="#111" stroke-width="1.500"/></symbol>
<symbol id="mouse" viewBox="0 0 30 32"><path d="M6 14L4 6c0-6 9-6 10 0l5 8c8 4 8 16 1 17-8 0-9-8-8-12z" fill="#fff" stroke="#111" stroke-width="3"/><path d="M8 3l5 12" stroke="#111" stroke-width="3"/><circle cx="18" cy="23" r="3" fill="none" stroke="#111" stroke-width="2"/><path d="M20 8l8-6M1 20l3 2M24 7h3" stroke="#111" stroke-width="2" stroke-dasharray="2 2"/></symbol>
<symbol id="lock" viewBox="0 0 26 30"><path d="M6 14V9c0-9 14-9 14 0v5" fill="none" stroke="#888" stroke-width="4"/><path d="M6 14V9c0-9 14-9 14 0v5" fill="none" stroke="#ddd" stroke-width="1"/><rect x="1" y="13" width="24" height="17" rx="2" fill="#666"/></symbol>
<symbol id="globe" viewBox="0 0 32 28"><path d="M9 4h14l8 9-7 10-8 5-8-5-7-10z" fill="#e8e8e8" stroke="#777" stroke-width="1.500"/><path d="M10 1h12M1 13h30M5 8h22M7 20h18M16 1v26M11 2c-5 8-4 16 0 23M21 2c5 8 4 16 0 23" fill="none" stroke="#777" stroke-width="1.800"/></symbol>
<symbol id="bubble" viewBox="0 0 32 30"><path d="M16 1c20 0 20 21 9 24l5 4c-6 1-10-1-12-4C-5 25-4 1 16 1z" fill="#646464"/></symbol>
</svg>

<header class="titlebar"><svg class="logo"><use href="#logo"/></svg><span class="title">*QGIS_M01A02 — QGIS</span>
<svg class="winctl" viewBox="0 0 210 24"><path d="M2 12h20" stroke="#8a8a8a" stroke-width="2"/><rect x="94" y="6" width="15" height="15" rx="2.500" fill="none" stroke="#8a8a8a" stroke-width="2"/><path d="M98 2h10q5 0 5 5v10" fill="none" stroke="#8a8a8a" stroke-width="2"/><path d="M187 2l19 20M206 2l-19 20" stroke="#8a8a8a" stroke-width="1.800"/></svg></header>
<nav class="menu"><span>Pro<u>j</u>ect</span><span><u>E</u>dit</span><span><u>V</u>iew</span><span><u>L</u>ayer</span><span><u>S</u>ettings</span><span><u>P</u>lugins</span><span>Vect<u>o</u>r</span><span><u>R</u>aster</span><span><u>D</u>atabase</span><span><u>W</u>eb</span><span><u>M</u>esh</span><span>Pro<u>c</u>essing</span><span><u>H</u>elp</span></nav>

<div class="bar">
<div class="grp"><i class="hd"></i><b><svg><use href="#new"/></svg></b><b><svg><use href="#open"/></svg></b><b><svg><use href="#save"/></svg></b><b><svg><use href="#layout"/></svg></b><b><svg><use href="#layman"/></svg></b><b><svg><use href="#style"/></svg></b></div>
<div class="grp"><i class="hd"></i><b class="on"><svg><use href="#hand"/></svg></b><b><svg><use href="#pan"/></svg></b><b><svg><use href="#zin"/></svg></b><b><svg><use href="#zout"/></svg></b><b><svg><use href="#zfull"/></svg></b><b><svg><use href="#zsel"/></svg></b><b><svg><use href="#zlay"/></svg></b><b class="off"><svg><use href="#zone"/></svg></b><b><svg><use href="#zlast"/></svg></b><b class="off"><svg><use href="#znext"/></svg></b><b><svg><use href="#newmap"/></svg></b><b><svg><use href="#new3d"/></svg></b><b><svg><use href="#newbm"/></svg></b><b><svg><use href="#bms"/></svg></b><b><svg><use href="#clock"/></svg></b><b><svg><use href="#refresh"/></svg></b></div>
<div class="grp"><i class="hd"></i><b><svg><use href="#sel"/></svg></b><i class="dd"></i><b><svg><use href="#eps"/></svg></b><i class="dd"></i><b><svg><use href="#desel"/></svg></b><i class="dd"></i><b><svg><use href="#selloc"/></svg></b><i class="dd"></i></div>
<div class="grp"><i class="hd"></i><b><svg><use href="#ident"/></svg></b><b><svg><use href="#abacus"/></svg></b><b class="on"><svg><use href="#gear"/></svg></b><b><svg><use href="#sigma"/></svg></b><b><svg><use href="#table"/></svg></b><i class="dd"></i><b><svg><use href="#ruler"/></svg></b><i class="dd"></i><b class="on"><svg><use href="#tip"/></svg></b><b class="off"><svg><use href="#action"/></svg></b><i class="dd dim"></i></div>
</div>

<div class="bar">
<div class="grp"><i class="hd"></i><b><svg><use href="#dsm"/></svg></b><b><svg><use href="#gpkg"/></svg></b><b><svg><use href="#vlay"/></svg></b><b><svg><use href="#feather"/></svg></b><b><svg><use href="#chip"/></svg></b><b><svg><use href="#mesh"/></svg></b><b><svg><use href="#vmesh"/></svg></b></div>
<div class="grp edit"><i class="hd"></i><b class="off"><svg><use href="#pencils"/></svg></b><b><svg><use href="#pencil"/></svg></b><b class="off"><svg><use href="#doc"/></svg></b><i class="dd dim"></i><b class="off"><svg><use href="#dots"/></svg></b><b class="off"><svg><use href="#poly"/></svg></b><b class="off"><svg><use href="#vtool"/></svg></b><i class="dd dim"></i><b class="off"><svg><use href="#multi"/></svg></b><b class="off"><svg><use href="#del"/></svg></b><b class="off"><svg><use href="#cut"/></svg></b><b class="off"><svg><use href="#copy"/></svg></b><b class="off"><svg><use href="#paste"/></svg></b><b class="off"><svg><use href="#undo"/></svg></b><b class="off"><svg><use href="#redo"/></svg></b></div>
<div class="grp"><i class="hd"></i><b><svg><use href="#abc"/></svg></b><b><svg><use href="#diag"/></svg></b><i class="sep"></i><b><svg><use href="#abpin"/></svg></b><b><svg><use href="#abcred"/></svg></b><i class="sep"></i><b><svg><use href="#abpiny"/></svg></b><b><svg><use href="#abceye"/></svg></b><b><svg><use href="#abcmove"/></svg></b><b><svg><use href="#abcrot"/></svg></b><b><svg><use href="#abced"/></svg></b></div>
<div class="grp"><i class="hd"></i><b><svg><use href="#meta"/></svg></b></div>
<div class="grp"><i class="hd"></i><b><svg><use href="#pycon"/></svg></b><b><svg><use href="#plot"/></svg></b><i class="dd"></i></div>
<div class="grp"><i class="hd"></i><b><svg><use href="#help"/></svg></b></div>
<div class="grp"><i class="hd"></i></div>
</div>

<div class="bar">
<div class="grp"><i class="hd"></i><b class="off"><svg><use href="#tri"/></svg></b><b class="off"><svg><use href="#pmove"/></svg></b><i class="dd dim"></i><b class="off"><svg><use href="#prot"/></svg></b><b class="off"><svg><use href="#pscale"/></svg></b><b class="off"><svg><use href="#simp"/></svg></b><b class="off"><svg><use href="#simp"/></svg></b></div>
<div class="grp shapes"><b class="off"><svg><use href="#arc"/></svg></b><b class="off"><svg><use href="#circ"/></svg></b><i class="dd dim"></i><b class="off"><svg><use href="#ell"/></svg></b><i class="dd dim"></i><b class="off"><svg><use href="#rectt"/></svg></b><i class="dd dim"></i><b class="off"><svg><use href="#penta"/></svg></b><i class="dd dim"></i></div>
</div>

<div class="bar snap">
<div class="grp"><i class="hd"></i><b><svg><use href="#magnet"/></svg></b><b class="off2"><svg><use href="#vnode"/></svg><i class="corner"></i></b><b class="on off2"><svg><use href="#sq3"/></svg><i class="corner"></i></b><span class="spin dis"><span>12</span><i class="ud"></i></span><span class="spin dis nextbox"></span></div>
</div>

<main class="main">
<section class="layers">
<h2>Layers</h2>
<div class="ltools"><svg><use href="#brush"/></svg><svg><use href="#addg"/></svg><span><svg><use href="#eye"/></svg><i class="corner"></i></span><span><svg><use href="#filter"/></svg><i class="corner"></i></span><svg class="off"><use href="#epsf"/></svg><i class="dd dim"></i><svg><use href="#expand"/></svg><svg><use href="#collapse"/></svg><i class="cutbox"></i></div>
<div class="ltree">
<div class="lr"><i class="tw"></i><i class="cb"></i><svg class="sy"><use href="#pts"/></svg><em>R.HCMC.NodoValle</em></div>
<div class="lr"><i class="tw"></i><i class="cb"></i><svg class="sy"><use href="#pts"/></svg><em>R.HCMC.NodoValle</em></div>
<div class="lr tb"><svg><use href="#tbl"/></svg><strong>R.HCMC.NodoValle</strong></div>
<div class="lr tb"><svg><use href="#tbl"/></svg><strong>NodoEjeValleGIS</strong></div>
<div class="lr"><i></i><i class="cb"><svg><use href="#check"/></svg></i><i class="sw white"></i><strong class="ul">CuencaHastaJ4660</strong></div>
<div class="lr"><i></i><i class="cb"></i><i class="sw pink"></i><em>CuencaHastaJ4682</em></div>
<div class="lr"><i></i><i class="cb"></i><i class="sw tan"></i><em>CuencaHastaJ4685</em></div>
<div class="lr"><i></i><i class="cb"></i><i class="sw lime"></i><em>CuencaHastaSink1</em></div>
<div class="lr"><i></i><i class="cb"></i><i class="sw green"></i><em>CuencaLateral1Este</em></div>
<div class="lr"><i></i><i class="cb"></i><i class="sw rose"></i><em>CuencaLateral2Oeste</em></div>
<div class="lr"><i class="tw"></i><i class="cb"><svg><use href="#check"/></svg></i><svg class="sy"><use href="#ras"/></svg><strong>PMedia1981a2003</strong></div>
<div class="lr"><i class="tw"></i><i class="cb"></i><svg class="sy"><use href="#ras"/></svg><em>ETR_Turc</em></div>
</div>
</section>

<section class="map">
<svg class="basin" viewBox="0 0 1568 1568" preserveAspectRatio="none"><path vector-effect="non-scaling-stroke" d="M683 140L708 150L715 133L727 126L738 132L745 156L815 148L825 172L862 178L873 212L922 206L945 228L960 222L968 196L990 184L1020 206L1035 205L1060 217L1072 213L1078 188L1100 186L1108 163L1175 168L1182 147L1240 140L1282 155L1288 180L1315 200L1305 232L1283 262L1300 286L1325 290L1350 308L1390 311L1400 352L1447 388L1455 440L1415 480L1395 532L1373 562L1368 580L1350 590L1335 622L1318 665L1300 725L1288 750L1275 795L1262 800L1258 835L1247 855L1237 915L1220 938L1200 953L1183 1000L1165 1043L1150 1058L1120 1070L1078 1100L1055 1118L1032 1125L1025 1170L1008 1202L985 1208L987 1235L965 1270L945 1325L935 1342L918 1347L912 1368L892 1382L875 1437L855 1445L835 1472L825 1450L770 1436L755 1422L738 1424L710 1393L648 1395L645 1380L653 1362L640 1342L600 1330L560 1316L548 1333L522 1315L515 1298L492 1300L482 1260L455 1245L453 1218L425 1198L420 1170L400 1137L372 1125L360 1090L340 1060L293 1065L293 1053L312 1045L320 1010L293 1005L290 960L275 955L270 935L245 928L232 900L175 875L185 835L155 830L135 783L90 780L82 752L133 703L155 705L175 685L178 655L197 635L248 672L285 670L293 643L328 622L342 638L362 632L383 595L378 565L358 525L358 503L412 497L407 432L458 417L475 398L540 366L600 358L632 335L633 282L665 275L690 250L700 225L660 200L662 185L670 160Z"/></svg>
<span class="maplabel">Cuenca hasta J4660</span>
</section>

<section class="tool">
<div class="thead"><h2>Processing Toolbox</h2><svg viewBox="0 0 52 24"><g fill="none" stroke="#666" stroke-width="1.800"><rect x="1" y="1" width="20" height="20" rx="4"/><rect x="5.500" y="9" width="8" height="8"/><path d="M10 9V5h8v8h-4"/><rect x="30" y="1" width="20" height="20" rx="4"/></g><path d="M35 6l10 10M45 6L35 16" stroke="#555" stroke-width="4"/></svg></div>
<div class="ttools"><span><svg><use href="#gears"/></svg><i class="corner"></i></span><span><svg><use href="#py"/></svg><i class="corner"></i></span><svg><use href="#hist"/></svg><svg><use href="#page"/></svg><i class="sep"></i><svg><use href="#edit"/></svg><i class="sep"></i><svg><use href="#wrench"/></svg></div>
<div class="field tsearch"><svg class="mag"><use href="#search"/></svg><span>zonal sta</span><svg class="clr"><use href="#clr"/></svg></div>
<div class="ttree">
<div class="tr l1"><i class="dn"></i><svg><use href="#logo"/></svg><span>Raster analysis</span></div>
<div class="tr l2"><svg><use href="#gear"/></svg><span>Raster layer zonal statistics</span></div>
<div class="tr l2"><svg><use href="#gear"/></svg><span>Zonal histogram</span></div>
<div class="tr l2"><svg><use href="#gear"/></svg><span>Zonal minimum/maximum point</span></div>
<div class="tr l2 hov"><svg><use href="#gear"/></svg><span>Zonal statistics</span></div>
<div class="tr l1"><i class="dn"></i><svg><use href="#grass"/></svg><span>GRASS</span></div>
<div class="tr sub"><i class="dn"></i><span>Raster (r.*)</span></div>
<div class="tr l3"><svg><use href="#grass"/></svg><span>r.stats.zonal</span></div>
</div>
<div class="tabs"><span class="t1">Browser</span><span class="t2">Processing Toolbox</span><i></i></div>
</section>
</main>

<footer class="status">
<div class="field locator"><svg class="mag"><use href="#search"/></svg><span>Type to locate (Ctrl+K)</span></div>
<span class="lb coord">Coordinate</span><div class="field cbox">1591081, 1103150</div><svg class="mouse"><use href="#mouse"/></svg>
<span class="lb scale">Scale</span><div class="field sbox"><span>1:298670</span><i class="drop"></i></div><svg class="lock"><use href="#lock"/></svg>
<span class="lb magn">Magnifier</span><div class="spin mbox"><span>100%</span><i class="ud"></i></div>
<span class="lb rot">Rotation</span><div class="spin rbox"><span>0.0 °</span><i class="ud"></i></div>
<i class="cb"><svg><use href="#check"/></svg></i><span class="lb ren">Render</span>
<svg class="globe"><use href="#globe"/></svg><span class="lb epsg">EPSG:3116</span><svg class="bubble"><use href="#bubble"/></svg>
</footer>

<div class="dialog">
<div class="dtitle"><svg class="logo"><use href="#logo"/></svg><span>Raster Analysis - Zonal Statistics</span><svg class="x" viewBox="0 0 20 20"><path d="M0 0l20 20M20 0L0 20" stroke="#8a8a8a" stroke-width="2"/></svg></div>
<div class="dbody">
<div class="dleft">
<div class="dtabs"><span class="a">Parameters</span><span class="b">Log</span></div>
<div class="dpanel">
<div class="form">
<label>Input layer</label>
<div class="fr"><div class="combo in1"><svg class="pl"><use href="#polyi"/></svg><span>CuencaHastaJ4660 []</span><i class="car"></i></div><svg class="it"><use href="#iter"/></svg><svg class="wr"><use href="#wrench"/></svg><div class="btn dots">...<i class="corner"></i></div></div>
<div class="ck c1"><i class="cb"></i><span>Selected features only</span></div>
<label>Raster layer</label>
<div class="fr"><div class="combo"><svg class="ra"><use href="#ras"/></svg><span>PMedia1981a2003 []</span><i class="car"></i></div><div class="btn dots">...</div></div>
<label>Raster band</label>
<div class="fr"><div class="combo"><span class="bnd">Band 1</span><i class="car"></i></div></div>
<label>Output column prefix</label>
<div class="fr lf"><div class="field">_</div></div>
<label>Statistics to calculate</label>
<div class="fr lf"><div class="field dis">Count,Mean</div><div class="btn dots">...</div></div>
<label>Zonal Statistics</label>
<div class="fr lf"><div class="field path"><span>C/file/temp/CuencaHastaJ4660PMed.csv</span><svg class="clr"><use href="#clr"/></svg></div><div class="btn dots tall">...<i class="corner"></i></div></div>
<div class="ck c2"><i class="cb"><svg><use href="#check"/></svg></i><span>Open output file after running algorithm</span></div>
</div></div></div>
<div class="dmid"><i class="rt"></i><i class="grip"></i></div>
<div class="dhelp"><h1>Zonal statistics</h1><p>This algorithm calculates statistics<br>of a raster layer for each feature of<br>an overlapping polygon vector<br>layer.</p></div>
</div>
<div class="dfoot"><div class="field prog">0%</div><div class="btn dim">Cancel</div></div>
<div class="dbtns"><div class="btn adv">Advanced<i></i></div><div class="btn batch">Run as Batch Process...</div><div class="btn run">Run</div><div class="btn">Close</div><div class="btn">Help</div></div>
</div>
</body>
</html>
```
FILE: styles.css
```css
*{box-sizing:border-box}
body{margin:0;width:2560px;height:1504px;overflow:hidden;display:flex;flex-direction:column;position:relative;background:#efefef;color:#000;font:22px/28px "DejaVu Sans Condensed","DejaVu Sans","Liberation Sans",sans-serif;letter-spacing:-.27px;white-space:nowrap}
i{font-style:normal;display:block}
b{font-weight:normal;display:block}
h2{margin:0;font-size:22px;font-weight:normal;line-height:28px}
.defs{position:absolute;width:0;height:0;visibility:hidden}
.ic-abc{font:bold 17px "DejaVu Sans Condensed",sans-serif;letter-spacing:-1px;fill:#222}
.ic-abc.red{fill:#f02020}
.logo{width:30px;height:30px;flex:none}

.titlebar{height:45px;flex:none;display:flex;align-items:center;padding-left:3px;background:#f3f3f3;color:#8a8a8a;font-family:"Open Sans","Noto Sans",sans-serif;font-size:22.500px}
.title{margin-left:8px;margin-top:2px;letter-spacing:.25px}
.winctl{width:210px;height:24px;margin-left:auto;margin-right:35px;margin-bottom:4px}
.menu{height:37px;flex:none;display:flex;gap:29px;padding:5px 0 0 21px;color:#999;border-bottom:3px solid #d6d6d6;letter-spacing:-.35px}
.menu u{text-underline-offset:4px;text-decoration-thickness:1px}

.bar{height:78px;flex:none;display:flex;padding-top:3px;background:linear-gradient(#fbfbfb,#eeeeee);border-bottom:3px solid #b4b4b4}
.bar.snap{height:76px}
.grp{display:flex;align-items:center;padding-right:8px;flex:none}
.grp b{width:66px;height:62px;display:flex;align-items:center;justify-content:center;position:relative;padding-left:1px}
.grp b svg{width:48px;height:48px}
.grp .on{background:#dadada;border:2px solid #adadad;border-radius:5px;width:64px;margin:0 0 0 2px}
.off svg,svg.off{opacity:.36;filter:grayscale(.7)}
.off2 svg{opacity:.35}
.off2 .corner{opacity:.6}
.hd{width:24px;height:34px;background:radial-gradient(circle at 2px 2px,#b5b5b5 1.100px,transparent 1.500px) 9px 0/6px 7px repeat-y,radial-gradient(circle at 2px 2px,#b5b5b5 1.100px,transparent 1.500px) 15px 0/6px 7px repeat-y}
.dd{width:24px;height:12px;background:#4d4d4d;clip-path:polygon(4px 0,20px 0,12px 12px)}
.dd.dim{background:#a0a0a0}
.sep{height:38px;border-left:2px solid #d5d5d5;margin-left:7px;width:7px}
.edit{margin-right:-8px}
.edit .hd{width:31px}
.shapes{margin-left:907px}
.corner{position:absolute;right:0;bottom:2px;width:12px;height:9px;background:#4d4d4d;clip-path:polygon(0 0,100% 0,50% 100%)}
.grp .corner{right:3px;bottom:5px}
.spin{display:flex;align-items:center;height:39px;background:#fff;border:2px solid #adadad;border-radius:5px;padding-left:10px;box-shadow:inset 0 3px 1px #ededed}
.spin.dis{width:167px;margin-left:2px;background:#efefef;color:#777;box-shadow:none}
.spin.nextbox{width:60px;margin-left:3px}
.ud{margin-left:auto;width:28px;height:100%;border-left:2px solid #adadad;position:relative}
.ud::before,.ud::after{content:"";position:absolute;left:5px;width:16px;height:9px;background:#5c5c5c}
.ud::before{top:7px;clip-path:polygon(50% 0,100% 100%,0 100%)}
.ud::after{bottom:6px;clip-path:polygon(0 0,100% 0,50% 100%)}
.dis .ud::before,.dis .ud::after{background:#999}

.main{height:1056px;flex:none;display:flex}
.layers{width:410px;display:flex;flex-direction:column}
.layers h2{padding:10px 0 0 8px}
.ltools{height:65px;padding:16px 0 0 16px;display:flex;align-items:flex-start}
.ltools svg{width:32px;height:32px;display:block;margin-right:19px}
.ltools span{position:relative;display:block}
.ltools .corner{right:12px;bottom:-1px}
.ltools .off{margin-right:18px}
.ltools .dd{margin:12px 11px 0 -9px;width:24px}
.ltools .cutbox{width:20px;height:25px;border:2px solid #888;margin-top:2px;margin-left:-1px}
.ltree{flex:1;background:#fff;border:2px solid #b4b4b4;border-left:1px solid #b4b4b4;font-weight:bold;letter-spacing:-.02px}
.lr{height:36px;display:grid;grid-template-columns:47px 40px 44px 1fr;align-items:center}
.lr em{color:#808080}
.lr.tb{grid-template-columns:49px 42px 1fr}
.lr.tb svg{grid-column:2;width:28px;height:32px}
.ul{text-decoration:underline;text-decoration-thickness:2px;text-underline-offset:3px}
.tw{width:9px;height:16px;margin-left:17px;background:#5c5c5c;clip-path:polygon(0 0,100% 50%,0 100%)}
.cb{width:28px;height:28px;border:2px solid #bdbdbd;background:#fff;flex:none}
.cb svg{width:28px;height:28px;margin:-2px;display:block}
.sy{width:26px;height:26px;margin-left:4px}
.sw{width:33px;height:32px;border:2px solid #444}
.white{background:#fff}.pink{background:#e05a8a}.tan{background:#bdb296}.lime{background:#84b86f}.green{background:#6f9c70}.rose{background:#e6718c}

.map{flex:1;margin-top:4px;border-top:1px solid #b4b4b4;position:relative;background:
radial-gradient(250px 270px at 1040px 1065px,#20998a 0,rgba(33,145,140,.88) 20%,rgba(38,130,142,.5) 52%,rgba(44,113,142,0) 100%),
radial-gradient(210px 290px at 976px 310px,#43206c 0,rgba(67,33,109,.9) 22%,rgba(65,44,118,.55) 50%,rgba(63,62,128,.2) 78%,rgba(62,72,132,0) 100%),
radial-gradient(200px 170px at 1320px 780px,rgba(63,69,136,.65) 0,rgba(62,72,137,.35) 50%,rgba(60,80,138,0) 100%),
radial-gradient(120px 160px at 950px 10px,#36628e 0,rgba(58,88,140,0) 100%),
radial-gradient(360px 260px at 961px 950px,rgba(50,100,142,.6) 0,rgba(55,92,140,0) 100%),
radial-gradient(300px 450px at 1655px 850px,rgba(50,103,142,.5) 0,rgba(55,92,140,0) 100%),
linear-gradient(176deg,#3e3f80 0,#3d4583 18%,#3d4984 38%,#3b5189 58%,#39588b 76%,#34648d 90%,#2f708e 100%)}
.basin{position:absolute;left:970px;top:263px;width:620px;height:560px}
.basin path{fill:none;stroke:#232323;stroke-width:5.500px;stroke-linejoin:round}
.maplabel{position:absolute;left:1171px;top:511px;font:26px/36px "Open Sans","Noto Sans",sans-serif;letter-spacing:.05px;color:#323232;-webkit-text-stroke:6px #fafafa;paint-order:stroke fill;stroke-linejoin:round}

.tool{width:495px;padding-left:13px;display:flex;flex-direction:column}
.thead{display:flex;height:53px;padding:10px 2px 0 8px}
.thead svg{width:52px;height:24px;margin:2px 0 0 auto}
.ttools{display:flex;align-items:center;height:36px;margin-bottom:14px;padding-left:15px}
.ttools svg{width:34px;height:34px;display:block;margin-right:16px}
.ttools span{position:relative}
.ttools .corner{right:12px;bottom:-1px}
.ttools .sep{height:24px;margin:0 9px 0 0;width:5px;border-color:#fff}
.field{height:43px;background:#fff;border:2px solid #adadad;border-radius:5px;box-shadow:inset 0 3px 1px #ededed;display:flex;align-items:center;padding:2px 4px 0}
.tsearch{height:44px;padding-left:16px;padding-top:3px;flex:none;margin-right:-1px}
.mag{width:26px;height:26px;margin-right:14px;margin-top:-3px}
.clr{width:26px;height:20px;margin-left:auto;margin-right:13px;margin-top:-3px}
.ttree{flex:1;background:#fff;border:2px solid #b9b9b9;border-left-width:1px;margin-right:1px;padding-top:1px}
.tr{height:36px;display:flex;align-items:center}
.tr svg{width:30px;height:30px;margin-right:12px}
.l1{padding-left:13px}
.l1 .dn{margin-right:20px}
.l2{padding-left:88px;letter-spacing:-.34px}
.l3{padding-left:129px;height:32px}
.sub{padding-left:53px;height:30px}
.sub .dn{margin-right:18px}
.dn{width:16px;height:9px;background:#5c5c5c;clip-path:polygon(0 0,100% 0,50% 100%)}
.hov{background:#efefef}
.tabs{height:51px;padding-top:2px;display:flex;align-items:flex-start;letter-spacing:-.05px}
.tabs span{border:2px solid #adadad;border-top-width:3px;border-radius:0 0 6px 6px;display:flex;align-items:center;justify-content:center;padding-top:4px}
.tabs .t1{width:129px;height:44px;background:#dcdcdc}
.tabs .t2{width:234px;height:47px;background:#f8f8f8;border-top-color:#f8f8f8}
.tabs i{flex:1;border-top:3px solid #adadad}

.status{flex:1;display:flex;align-items:center;padding:2px 15px 0 8px}
.status>*{flex:none}
.status .lb{padding-top:3px}
.locator{width:399px;padding-left:16px;padding-top:4px;color:#777}
.locator .mag{margin-right:13px}
.coord{margin-left:539px;width:105px;margin-right:7px}
.cbox{width:212px;justify-content:center;padding-top:4px;letter-spacing:-.4px}
.mouse{width:30px;height:32px;margin-left:10px}
.scale{margin-left:28px;width:49px;margin-right:9px}
.sbox{width:161px;padding:0 0 0 7px;letter-spacing:-.4px}
.sbox span{padding-top:4px}
.drop{margin-left:auto;width:42px;height:100%;border-left:2px solid #ddd;position:relative}
.drop::after{content:"";position:absolute;left:11px;top:15px;width:17px;height:10px;background:#5c5c5c;clip-path:polygon(0 0,100% 0,50% 100%)}
.lock{width:26px;height:30px;margin-left:22px}
.magn{margin-left:19px;width:88px;margin-right:8px}
.mbox{width:167px;padding-left:8px}
.mbox span,.rbox span{padding-top:4px}
.rot{margin-left:19px;width:80px;margin-right:19px}
.rbox{width:167px;padding-left:9px}
.status .cb{margin-left:14px;border-color:#999}
.ren{margin-left:9px;width:68px}
.globe{width:32px;height:28px;margin-left:32px}
.epsg{margin-left:4px;width:107px}
.bubble{width:32px;height:30px;margin-left:auto}

.dialog{position:absolute;left:395px;top:193px;width:977px;height:1257px;background:#efefef;border:2px solid #b9b9b9;border-radius:17px;display:flex;flex-direction:column;overflow:hidden}
.dtitle{height:56px;flex:none;background:#f3f3f3;display:flex;align-items:center;padding:0 22px 0 13px;color:#8c8c8c;font:22.500px/30px "Open Sans","Noto Sans",sans-serif;letter-spacing:.12px}
.dtitle span{margin-left:6px;margin-top:1px}
.x{width:20px;height:20px;margin-left:auto}
.dbody{display:flex;height:1004px;margin:22px 22px 0}
.dleft{width:531px;display:flex;flex-direction:column;height:1001px}
.dtabs{display:flex;align-items:flex-end;height:47px;position:relative;margin-bottom:-2px}
.dtabs .a{width:159px;height:47px;background:#fdfdfd;border:2px solid #adadad;border-bottom:0;border-radius:6px 6px 0 0;text-align:center;padding-top:10px}
.dtabs .b{width:83px;height:42px;margin-bottom:2px;background:#e6e6e6;border:2px solid #b9b9b9;border-left:0;border-bottom:0;border-radius:0 6px 0 0;text-align:center;padding-top:10px}
.dpanel{flex:1;border:2px solid #adadad;background:#fdfdfd;padding:15px 1px 1px 2px}
.form{height:100%;background:#efefef;padding:9px 8px 0 8px}
.form label{display:block;height:28px;line-height:31px}
.fr{display:flex;gap:12px;height:48px;margin:11px 0 13px}
.fr.lf{height:44px}
.combo,.btn{display:flex;align-items:center;background:linear-gradient(#fefefe,#eeeeee);border:2px solid #adadad;border-radius:5px}
.combo{flex:1;padding:2px 13px 0 10px;height:48px}
.combo.in1{flex:none;width:306px}
.pl{width:32px;height:26px;margin-right:6px;margin-top:-6px}
.ra{width:26px;height:26px;margin:0 8px 0 4px}
.bnd{margin-left:-2px}
.car{margin-left:auto;width:16px;height:9px;background:#5c5c5c;clip-path:polygon(0 0,100% 0,50% 100%);margin-top:-4px}
.it{width:47px;height:42px;margin:4px 0 0 6px}
.wr{width:50px;height:47px;margin:2px 0 0 11px}
.btn{justify-content:center;position:relative;padding-top:3px}
.dots{width:46px;height:42px;flex:none;margin-left:auto}
.dots.tall{height:44px}
.dots .corner{right:4px;bottom:6px;width:11px;height:7px}
.ck{display:flex;align-items:center;height:28px}
.ck span{margin:2px 0 0 10px}
.ck.c1{margin:23px 0 18px;color:#808080}
.c1 .cb{background:#efefef}
.ck.c2{margin-top:18px}
.fr .field{flex:1;height:44px}
.field.dis{background:#efefef;color:#777}
.fr .path{padding:3px 4px 0 0}
.path .clr{margin-left:0;margin-right:10px}
.path span{letter-spacing:-.2px;flex:1}
.dmid{width:33px;position:relative;display:flex;flex-direction:column;align-items:flex-start}
.rt{width:9px;height:18px;background:#3f3f3f;clip-path:polygon(0 0,100% 50%,0 100%);margin:3px 0 0 9px}
.grip{width:4px;height:36px;margin:468px 0 0 15px;background:radial-gradient(circle at 2px 2px,#aaa 1px,transparent 1.500px) 0 0/4px 6px}
.dhelp{flex:1;background:#fff;border:2px solid #b9b9b9;padding:11px 8px;color:#555}
.dhelp h1{margin:0;font:bold 32px/34px "Noto Sans","Open Sans",sans-serif;letter-spacing:.1px;color:#4f4f4f}
.dhelp p{margin:27px 0 0;line-height:28px;letter-spacing:-.15px}
.dfoot,.dbtns{display:flex;margin:0 21px 0 22px;gap:13px}
.dfoot{margin-top:50px}
.prog{width:757px;justify-content:center}
.dfoot .btn{width:159px;height:44px;margin-left:1px;color:#808080;border-color:#c4c4c4}
.dbtns{margin-top:12px}
.dbtns .btn{width:159px;height:44px}
.dbtns .batch{width:242px;letter-spacing:-.2px}
.dbtns .run{border-color:#9c9c9c}
.dbtns .adv{padding-right:24px}
.adv i{position:absolute;right:9px;top:16px;width:11px;height:8px;background:#5c5c5c;clip-path:polygon(0 0,100% 0,50% 100%)}
```
